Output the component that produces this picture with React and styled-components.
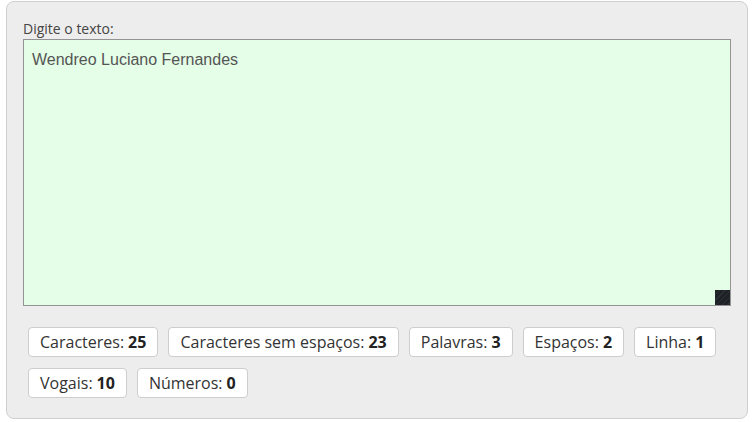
import React, { useState } from 'react'
import styled, { createGlobalStyle } from 'styled-components'

const GlobalStyle = createGlobalStyle`
  body {
    margin: 0;
    background: #fff;
    font-family: 'Open Sans', sans-serif;
  }
`

const Panel = styled.div`
  margin: 1px 4px 3px 6px;
  padding: 16px 16px 0 16px;
  background: #ededed;
  border: 1px solid #cfcfcf;
  border-radius: 8px;
  height: 418px;
  box-sizing: border-box;
`

const Label = styled.label`
  display: block;
  font-size: 14px;
  line-height: 21px;
  color: #444;
`

const TextArea = styled.textarea`
  display: block;
  width: 708px;
  height: 267px;
  box-sizing: border-box;
  margin: 0;
  padding: 11px 8px;
  border: 1px solid #939393;
  background: #e4fee7;
  font-family: 'Liberation Sans', Arial, sans-serif;
  font-size: 16px;
  color: #555;
  outline: none;
  resize: both;

  &::-webkit-resizer {
    background: repeating-linear-gradient(135deg, #1e2226 0 3px, #2c3034 3px 4px);
  }
`

const Stats = styled.div`
  display: flex;
  flex-wrap: wrap;
  gap: 11px 10px;
  padding: 0 5px;
  margin-top: 21px;
`

const Chip = styled.div`
  height: 30px;
  box-sizing: border-box;
  padding: 0 11px;
  display: flex;
  align-items: center;
  background: #fff;
  border: 1px solid #cdcdcd;
  border-radius: 4px;
  font-size: 16px;
  color: #333;

  b {
    margin-left: 4px;
    color: #222;
    font-weight: 700;
  }
`

const count = (text) => {
  const letters = text.length
  const noSpaces = text.replace(/\s/g, '').length
  const words = text.trim() ? text.trim().split(/\s+/).length : 0
  const spaces = (text.match(/ /g) || []).length
  const lines = text.split('\n').length
  const vowels = (text.match(/[aeiouáéíóúâêôãõà]/gi) || []).length
  const numbers = (text.match(/\d/g) || []).length
  return [
    ['Caracteres:', letters],
    ['Caracteres sem espaços:', noSpaces],
    ['Palavras:', words],
    ['Espaços:', spaces],
    ['Linha:', lines],
    ['Vogais:', vowels],
    ['Números:', numbers],
  ]
}

const App = () => {
  const [text, setText] = useState('Wendreo Luciano Fernandes')
  return (
    <>
      <GlobalStyle />
      <Panel>
        <Label htmlFor='texto'>Digite o texto:</Label>
        <TextArea id='texto' value={text} onChange={(e) => setText(e.target.value)} spellCheck={false} />
        <Stats>
          {count(text).map(([name, value]) => (
            <Chip key={name}>{name}<b>{value}</b></Chip>
          ))}
        </Stats>
      </Panel>
    </>
  )
}

export default App
